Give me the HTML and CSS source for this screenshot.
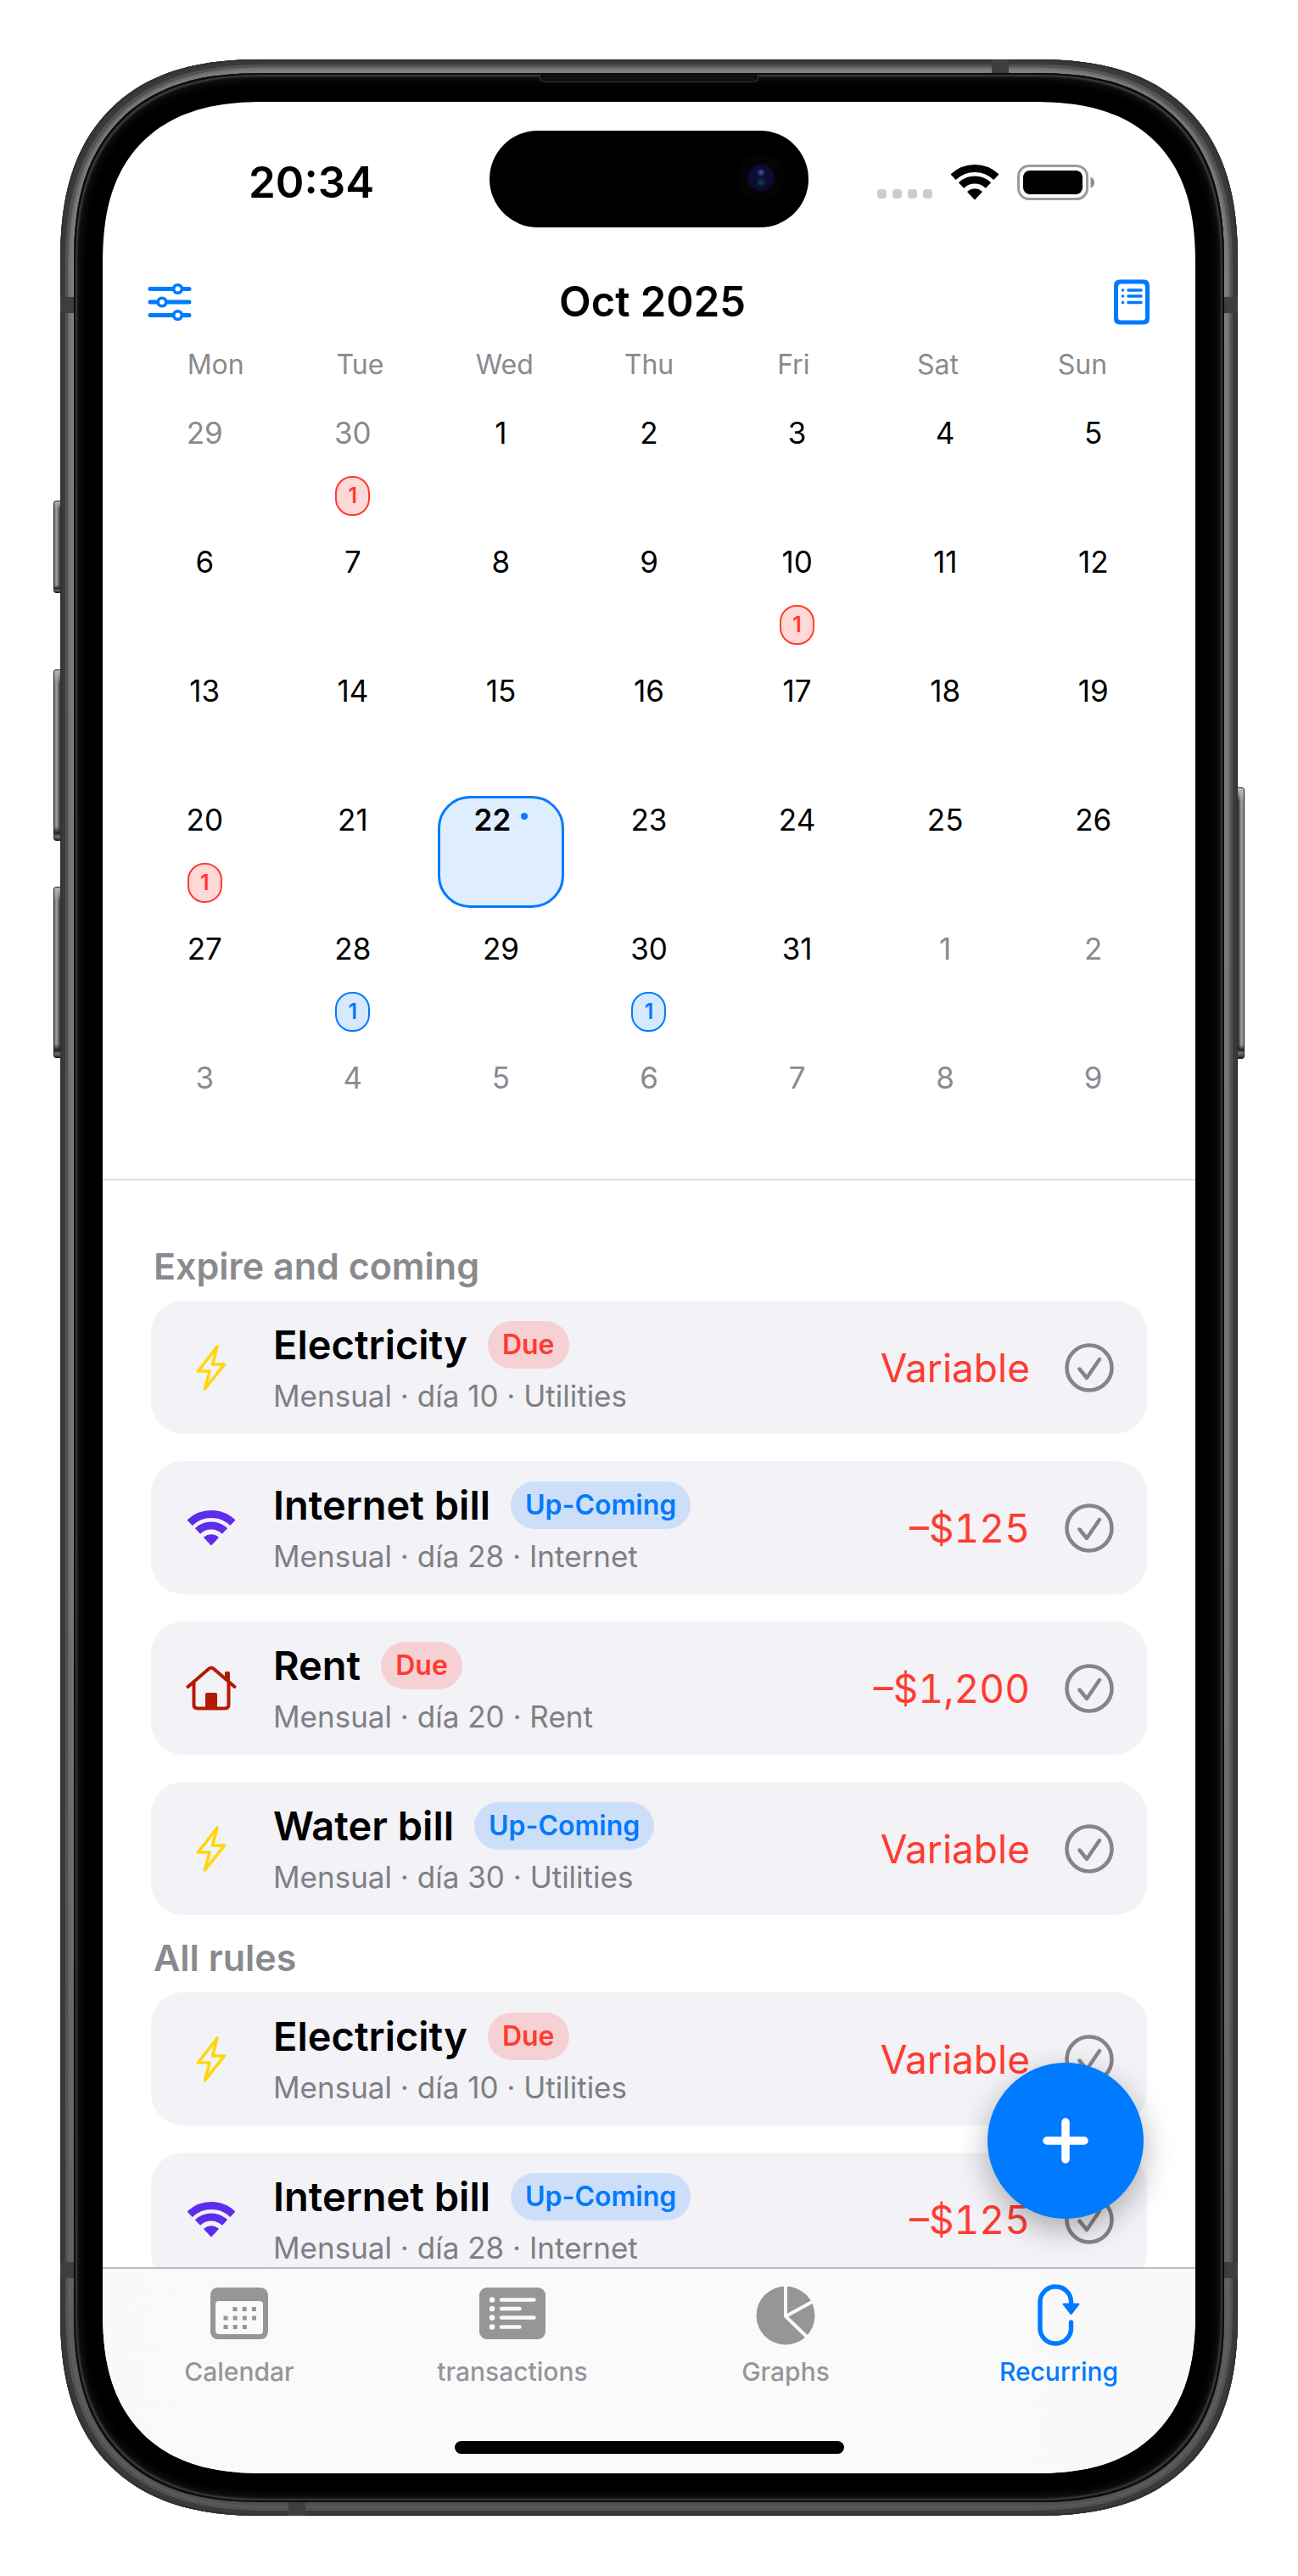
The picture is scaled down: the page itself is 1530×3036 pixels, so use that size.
FILE: index.html
```html
<!DOCTYPE html>
<html lang="en">
<head>
<meta charset="utf-8">
<meta name="viewport" content="width=device-width, initial-scale=1">
<title>Recurring</title>
<link rel="stylesheet" href="styles.css">
</head>
<body>
<svg class="defs" aria-hidden="true">
  <symbol id="wifi" viewBox="0 0 56 42">
    <path d="M2.6 14.8A36.5 36.5 0 0 1 53.4 14.8M12 24.5A23 23 0 0 1 44 24.5" fill="none" stroke="currentColor" stroke-width="9"/>
    <path d="M28 40.5L20 32A12.5 12.5 0 0 1 36 32Z" fill="currentColor" stroke="currentColor" stroke-width="1.5" stroke-linejoin="round"/>
  </symbol>
  <symbol id="bolt" viewBox="0 0 36 56">
    <path d="M25 3L2.500 32H16L10.500 53L33.500 24H19.500Z" fill="none" stroke="currentColor" stroke-width="3.600" stroke-linejoin="round"/>
  </symbol>
  <symbol id="house" viewBox="0 0 60 54">
    <path d="M2.500 25L27.500 3.500Q30 1.500 32.500 3.500L57.500 25" fill="none" stroke="currentColor" stroke-width="4" stroke-linecap="round"/>
    <path d="M9.500 20V46Q9.500 50.500 14 50.500H46Q50.500 50.500 50.500 46V20" fill="none" stroke="currentColor" stroke-width="4"/>
    <path d="M46 8.500Q46 7 47.500 7H50.500Q52 7 52 8.500V20L46 15Z" fill="currentColor"/>
    <path d="M23 50V34Q23 32 25 32H35Q37 32 37 34V50Z" fill="currentColor"/>
  </symbol>
  <symbol id="check" viewBox="0 0 60 60">
    <circle cx="30" cy="30" r="26.500" fill="none" stroke="currentColor" stroke-width="4.600"/>
    <path d="M18.500 31.500L27 42L42 20" fill="none" stroke="currentColor" stroke-width="4.400" stroke-linecap="round" stroke-linejoin="round"/>
  </symbol>
</svg>

<div class="phone">
  <span class="key key-action"></span>
  <span class="key key-up"></span>
  <span class="key key-down"></span>
  <span class="key key-side"></span>
  <div class="frame">
    <span class="band band-top"></span>
    <span class="band band-bottom"></span>
    <span class="band band-left-high"></span>
    <span class="band band-left-low"></span>
    <span class="band band-right-high"></span>
    <span class="band band-right-low"></span>
    <div class="bezel">
      <span class="earpiece"></span>
      <div class="screen">
        <div class="island"><span class="camera"></span></div>

        <div class="status">
          <time class="clock">20:34</time>
          <div class="indicators">
            <span class="signal"><i></i><i></i><i></i><i></i></span>
            <svg class="status-wifi"><use href="#wifi"/></svg>
            <svg class="battery" viewBox="0 0 92 42" aria-hidden="true">
              <rect x="1.500" y="1.500" width="81" height="39" rx="12.500" fill="none" stroke="#9c9c9c" stroke-width="3"/>
              <rect x="7" y="7" width="70" height="28" rx="8" fill="#000"/>
              <path d="M86.500 14.500Q91 16 91 21T86.500 27.500Z" fill="#8f8f8f"/>
            </svg>
          </div>
        </div>

        <header class="topbar">
          <button class="tool" type="button" aria-label="Filters">
            <svg width="52" height="46" viewBox="0 0 52 46" fill="none" stroke="currentColor" stroke-linecap="round">
              <path d="M3 7.500H49M3 23H49M3 38.500H49" stroke-width="5"/>
              <g fill="#fff" stroke-width="3.600"><circle cx="35.500" cy="7.500" r="4.800"/><circle cx="17" cy="23" r="4.800"/><circle cx="35.500" cy="38.500" r="4.800"/></g>
            </svg>
          </button>
          <h1 class="title">Oct 2025</h1>
          <button class="tool" type="button" aria-label="Rules">
            <svg width="44" height="54" viewBox="0 0 44 54" fill="none" stroke="currentColor">
              <path d="M8 .500H36Q43 .500 43 7.500V46.500Q43 53.500 36 53.500H8Q1 53.500 1 46.500V7.500Q1 .500 8 .500ZM9.500 5.500Q6 5.500 6 9V45Q6 48.500 9.500 48.500H34.500Q38 48.500 38 45V9Q38 5.500 34.500 5.500Z" fill="currentColor" fill-rule="evenodd" stroke="none"/>
              <path d="M18 13H33M18 20H33M18 27.500H33M11.500 13H11.600M11.500 20H11.600M11.500 27.500H11.600" stroke-width="3.600" stroke-linecap="round"/>
            </svg>
          </button>
        </header>

        <div class="weekdays"><span>Mon</span><span>Tue</span><span>Wed</span><span>Thu</span><span>Fri</span><span>Sat</span><span>Sun</span></div>

        <div class="month">
          <button class="day out">29</button>
          <button class="day out">30<span class="count due">1</span></button>
          <button class="day">1</button>
          <button class="day">2</button>
          <button class="day">3</button>
          <button class="day">4</button>
          <button class="day">5</button>
          <button class="day">6</button>
          <button class="day">7</button>
          <button class="day">8</button>
          <button class="day">9</button>
          <button class="day">10<span class="count due">1</span></button>
          <button class="day">11</button>
          <button class="day">12</button>
          <button class="day">13</button>
          <button class="day">14</button>
          <button class="day">15</button>
          <button class="day">16</button>
          <button class="day">17</button>
          <button class="day">18</button>
          <button class="day">19</button>
          <button class="day">20<span class="count due">1</span></button>
          <button class="day">21</button>
          <button class="day today"><span class="today-label">22<i class="dot"></i></span></button>
          <button class="day">23</button>
          <button class="day">24</button>
          <button class="day">25</button>
          <button class="day">26</button>
          <button class="day">27</button>
          <button class="day">28<span class="count coming">1</span></button>
          <button class="day">29</button>
          <button class="day">30<span class="count coming">1</span></button>
          <button class="day">31</button>
          <button class="day out">1</button>
          <button class="day out">2</button>
          <button class="day out">3</button>
          <button class="day out">4</button>
          <button class="day out">5</button>
          <button class="day out">6</button>
          <button class="day out">7</button>
          <button class="day out">8</button>
          <button class="day out">9</button>
        </div>

        <main class="rules">
          <h2 class="section">Expire and coming</h2>
          <ul class="cards">
            <li class="card">
              <span class="glyph electric"><svg width="36" height="56"><use href="#bolt"/></svg></span>
              <div class="info">
                <div class="name">Electricity<span class="pill due">Due</span></div>
                <div class="detail">Mensual · día 10 · Utilities</div>
              </div>
              <span class="amount">Variable</span>
              <button class="done" type="button" aria-label="Mark paid"><svg width="60" height="60"><use href="#check"/></svg></button>
            </li>
            <li class="card">
              <span class="glyph internet"><svg width="56" height="42"><use href="#wifi"/></svg></span>
              <div class="info">
                <div class="name">Internet bill<span class="pill coming">Up-Coming</span></div>
                <div class="detail">Mensual · día 28 · Internet</div>
              </div>
              <span class="amount">–$125</span>
              <button class="done" type="button" aria-label="Mark paid"><svg width="60" height="60"><use href="#check"/></svg></button>
            </li>
            <li class="card">
              <span class="glyph rent"><svg width="60" height="54"><use href="#house"/></svg></span>
              <div class="info">
                <div class="name">Rent<span class="pill due">Due</span></div>
                <div class="detail">Mensual · día 20 · Rent</div>
              </div>
              <span class="amount">–$1,200</span>
              <button class="done" type="button" aria-label="Mark paid"><svg width="60" height="60"><use href="#check"/></svg></button>
            </li>
            <li class="card">
              <span class="glyph electric"><svg width="36" height="56"><use href="#bolt"/></svg></span>
              <div class="info">
                <div class="name">Water bill<span class="pill coming">Up-Coming</span></div>
                <div class="detail">Mensual · día 30 · Utilities</div>
              </div>
              <span class="amount">Variable</span>
              <button class="done" type="button" aria-label="Mark paid"><svg width="60" height="60"><use href="#check"/></svg></button>
            </li>
          </ul>
          <h2 class="section">All rules</h2>
          <ul class="cards">
            <li class="card">
              <span class="glyph electric"><svg width="36" height="56"><use href="#bolt"/></svg></span>
              <div class="info">
                <div class="name">Electricity<span class="pill due">Due</span></div>
                <div class="detail">Mensual · día 10 · Utilities</div>
              </div>
              <span class="amount">Variable</span>
              <button class="done" type="button" aria-label="Mark paid"><svg width="60" height="60"><use href="#check"/></svg></button>
            </li>
            <li class="card">
              <span class="glyph internet"><svg width="56" height="42"><use href="#wifi"/></svg></span>
              <div class="info">
                <div class="name">Internet bill<span class="pill coming">Up-Coming</span></div>
                <div class="detail">Mensual · día 28 · Internet</div>
              </div>
              <span class="amount">–$125</span>
              <button class="done" type="button" aria-label="Mark paid"><svg width="60" height="60"><use href="#check"/></svg></button>
            </li>
          </ul>
        </main>

        <button class="add" type="button" aria-label="Add rule">
          <svg width="56" height="56" viewBox="0 0 56 56" stroke="#fff" stroke-width="9.500" stroke-linecap="round"><path d="M28 6V50M6 28H50"/></svg>
        </button>

        <nav class="tabs">
          <a class="tab" href="#calendar">
            <svg width="68" height="76" viewBox="0 0 68 76" fill="currentColor">
              <path fill-rule="evenodd" d="M10 7H58Q68 7 68 17V58Q68 68 58 68H10Q0 68 0 58V17Q0 7 10 7ZM10 23Q6 23 6 27V58Q6 62 10 62H58Q62 62 62 58V27Q62 23 58 23Z"/>
              <path d="M26.500 32.500H54M15.500 43H54M15.500 53.500H44" fill="none" stroke="currentColor" stroke-width="5" stroke-dasharray="5 6.200"/>
            </svg>
            Calendar
          </a>
          <a class="tab" href="#transactions">
            <svg width="78" height="76" viewBox="0 0 78 76">
              <rect y="7" width="78" height="61" rx="9" fill="currentColor"/>
              <path d="M26 21.500H64.500M26 32H47.500M26 42.500H64.500M26 53.500H47.500" stroke="#fafafb" stroke-width="4.400" stroke-linecap="round"/>
              <path d="M15 21.500H15.100M15 32H15.100M15 42.500H15.100M15 53.500H15.100" stroke="#fafafb" stroke-width="6.400" stroke-linecap="round"/>
            </svg>
            transactions
          </a>
          <a class="tab" href="#graphs">
            <svg width="70" height="76" viewBox="0 0 70 76">
              <circle cx="35" cy="40" r="34.500" fill="currentColor"/>
              <path d="M35 3V41L61 66M35 41L68 23" fill="none" stroke="#fafafb" stroke-width="4"/>
            </svg>
            Graphs
          </a>
          <a class="tab active" href="#recurring" aria-current="page">
            <svg width="50" height="76" viewBox="0 0 50 76">
              <path d="M39.500 48V54A18 18 0 0 1 21.500 73A18 18 0 0 1 3 54V24A18 18 0 0 1 21.500 6A18 18 0 0 1 39.500 25" fill="none" stroke="currentColor" stroke-width="5.400" stroke-linecap="round"/>
              <path d="M30.500 25.500H48.500Q50 26 49 27.500L40.500 38.500Q39.500 39.700 38.500 38.500L30 27.500Q29 26 30.500 25.500Z" fill="currentColor"/>
            </svg>
            Recurring
          </a>
        </nav>
        <span class="home"></span>
      </div>
    </div>
  </div>
</div>
</body>
</html>
```

FILE: styles.css
```css
:root {
  --blue: #007aff;
  --red: #ff3b30;
  --gray: #8a8a8e;
}

* {
  box-sizing: border-box;
}

body {
  margin: 0;
  padding: 70px 71px 71px;
  height: 100vh;
  background: #fff;
  color: #000;
  font-family: Inter, "Liberation Sans", sans-serif;
}

button {
  margin: 0;
  padding: 0;
  border: 0;
  background: none;
  color: inherit;
  font: inherit;
}

svg {
  display: block;
}

.defs {
  position: absolute;
  width: 0;
  height: 0;
}

/* Device body */
.phone {
  position: relative;
  height: 100%;
}

.frame {
  position: relative;
  height: 100%;
  padding: 16px;
  overflow: hidden;
  border-radius: 204px;
  background: linear-gradient(#86847f, #7c7a77 60%, #626361 90%, #4c4e4d);
  box-shadow: inset 0 0 0 2px #303234, inset 0 0 0 6px #383b3e, inset 0 0 0 9px #505254, inset 0 0 4px 11px #5f605f;
}

.bezel {
  position: relative;
  height: 100%;
  padding: 34px;
  border-radius: 188px;
  background: #000;
  box-shadow: inset 0 0 0 2px #0c0c0e, inset 0 0 2px 4px #3a3a3a, inset 0 0 14px 3px #2c2c2c;
}

.screen {
  position: relative;
  display: flex;
  flex-direction: column;
  height: 100%;
  overflow: hidden;
  border-radius: 168px;
  background: #fff;
}

@supports (corner-shape: superellipse(1.3)) {
  .frame { border-radius: 240px; corner-shape: superellipse(1.3); }
  .bezel { border-radius: 224px; corner-shape: superellipse(1.3); }
  .screen { border-radius: 192px; corner-shape: superellipse(1.3); }
}

.key {
  position: absolute;
  left: -8px;
  width: 12px;
  height: 202px;
  border: 1px solid #222;
  border-radius: 3px;
  background: linear-gradient(#b5b3ae, transparent 8%, transparent 92%, #222 96%, #777 98%, #222), linear-gradient(90deg, #777571, #a19f9a 30%, #4a4a48 60%);
}

.key-action { top: 520px; height: 109px; }
.key-up { top: 719px; }
.key-down { top: 975px; }

.key-side {
  top: 858px;
  right: -8px;
  left: auto;
  height: 320px;
  background: linear-gradient(#c5c3be, transparent 5%, transparent 95%, #222 97%, #777 98%, #222), linear-gradient(270deg, #8a8884, #a19f9a 30%, #3a3a38 60%);
}

.band {
  position: absolute;
  width: 20px;
  height: 16px;
  background: #3c3f42;
}

.band-top { top: 0; right: 270px; }
.band-bottom { bottom: 0; left: 269px; }
.band-left-high { top: 280px; left: 0; width: 16px; height: 19px; }
.band-left-low { bottom: 280px; left: 0; width: 16px; height: 19px; }
.band-right-high { top: 280px; right: 0; width: 16px; height: 19px; }
.band-right-low { right: 0; bottom: 280px; width: 16px; height: 19px; }

.earpiece {
  position: absolute;
  top: 1px;
  left: 50%;
  width: 258px;
  height: 10px;
  margin-left: -129px;
  border: 1px solid #333;
  border-top-color: #111;
  border-radius: 0 0 6px 6px;
  background: #101010;
}

.island {
  position: absolute;
  top: 34px;
  left: 50%;
  width: 376px;
  height: 114px;
  margin-left: -188px;
  border-radius: 57px;
  background: #000;
}

.camera {
  position: absolute;
  top: 39px;
  right: 40px;
  width: 32px;
  height: 32px;
  border-radius: 50%;
  background: radial-gradient(circle at 50% 32%, #4a58b0 0, transparent 18%), radial-gradient(circle at 50% 68%, #16404a 0, transparent 22%), radial-gradient(#0c0d3c, #0b0c30 55%, #0a0a18);
  box-shadow: 0 0 0 12px #050306;
}

/* Status bar */
.status {
  display: flex;
  flex-shrink: 0;
  align-items: center;
  justify-content: space-between;
  height: 66px;
  margin-top: 62px;
  padding: 0 118px 0 172px;
}

.clock {
  font-size: 51px;
  line-height: 64px;
  font-weight: 600;
}

.indicators {
  display: flex;
  align-items: center;
}

.signal {
  display: flex;
  gap: 7px;
  margin: 26px 22px 0 0;
}

.signal i {
  width: 11px;
  height: 11px;
  border-radius: 4px;
  background: #ccc;
}

.status-wifi {
  width: 56px;
  height: 42px;
  margin-right: 22px;
}

.battery {
  width: 92px;
  height: 42px;
}

/* Month header */
.topbar {
  display: flex;
  flex-shrink: 0;
  align-items: center;
  justify-content: space-between;
  height: 64px;
  margin-top: 76px;
  padding: 0 53px;
}

.title {
  margin: 0;
  font-size: 49px;
  line-height: 64px;
  font-weight: 600;
}

.tool {
  color: var(--blue);
}

.weekdays {
  display: grid;
  flex-shrink: 0;
  grid-template-columns: repeat(7, 1fr);
  margin: 22px 48px 32px;
  color: var(--gray);
  font-size: 32px;
  line-height: 40px;
  text-align: center;
}

.month {
  display: grid;
  flex-shrink: 0;
  grid-template-columns: repeat(7, 1fr);
  gap: 20px 26px;
  padding: 0 46px 16px;
  border-bottom: 1px solid #c8c8ca;
}

.day {
  display: flex;
  flex-direction: column;
  align-items: center;
  height: 132px;
  padding-top: 3px;
  border: 3px solid transparent;
  border-radius: 38px;
  font-size: 35px;
  line-height: 44px;
}

.out {
  color: var(--gray);
}

.today {
  border-color: var(--blue);
  background: #dfeeff;
  font-weight: 600;
}

.today-label {
  display: flex;
  gap: 12px;
}

.dot {
  width: 8px;
  height: 8px;
  margin-top: 14px;
  border-radius: 50%;
  background: var(--blue);
}

.count {
  width: 41px;
  height: 47px;
  margin-top: 29px;
  border: 2px solid;
  border-radius: 20px;
  font-size: 25px;
  line-height: 43px;
  font-weight: 600;
  text-align: center;
}

.count.due { background: #ffd9d7; color: var(--red); }
.count.coming { background: #d6e9ff; color: var(--blue); }

/* Rule lists */
.rules {
  flex: 1;
  min-height: 0;
  padding: 51px 57px 0;
  overflow: hidden;
}

.section {
  margin: 0 3px;
  padding: 22px 0 13px;
  color: var(--gray);
  font-size: 43px;
  line-height: 56px;
  font-weight: 600;
}

.cards {
  display: grid;
  gap: 32px;
  margin: 0;
  padding: 0;
  list-style: none;
}

.card {
  display: flex;
  align-items: center;
  height: 157px;
  padding: 0 38px 0 35px;
  border-radius: 38px;
  background: #f2f2f7;
}

.glyph {
  display: grid;
  flex-shrink: 0;
  place-items: center;
  width: 72px;
}

.electric { color: #ffd60a; }
.internet { color: #5e2ced; }
.rent { color: #b51a00; }

.info {
  flex: 1;
  margin-left: 37px;
}

.name {
  display: flex;
  align-items: center;
  gap: 24px;
  font-size: 47px;
  line-height: 56px;
  font-weight: 600;
}

.pill {
  padding: 0 17px;
  border-radius: 28px;
  font-size: 32px;
  line-height: 56px;
  font-weight: 600;
}

.pill.due { background: #f5d1d3; color: var(--red); }
.pill.coming { background: #cddff8; color: var(--blue); }

.detail {
  margin-top: 10px;
  color: #7f7f83;
  font-size: 35px;
  line-height: 44px;
}

.amount {
  color: var(--red);
  font-size: 46px;
  line-height: 60px;
  font-variant-numeric: tabular-nums;
}

.done {
  margin-left: 40px;
  color: #858589;
}

.add {
  position: absolute;
  right: 61px;
  bottom: 300px;
  display: grid;
  place-items: center;
  width: 184px;
  height: 184px;
  border-radius: 50%;
  background: var(--blue);
  box-shadow: 0 12px 36px rgba(0, 0, 0, .3);
}

/* Tab bar */
.tabs {
  display: grid;
  flex-shrink: 0;
  grid-template-columns: repeat(4, 1fr);
  height: 243px;
  padding-top: 15px;
  border-top: 2px solid #bcbcbf;
  background: linear-gradient(90deg, #f8f9f8, #fafafc 30%, #fafafc 75%, #f8f8f8);
}

.tab {
  display: flex;
  flex-direction: column;
  align-items: center;
  gap: 12px;
  color: #969698;
  font-size: 30px;
  line-height: 36px;
  font-weight: 500;
  text-decoration: none;
}

.active {
  color: var(--blue);
}

.home {
  position: absolute;
  bottom: 23px;
  left: 50%;
  width: 459px;
  height: 15px;
  margin-left: -229px;
  border-radius: 8px;
  background: #000;
}
```
